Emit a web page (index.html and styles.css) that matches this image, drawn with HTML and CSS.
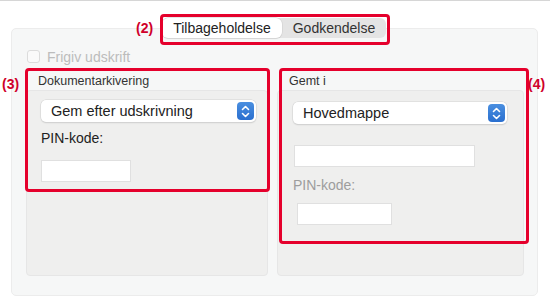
FILE: index.html
```html
<!DOCTYPE html>
<html lang="da">
<head>
<meta charset="UTF-8" />
<title>Tilbageholdelse</title>
<link rel="stylesheet" href="styles.css">
</head>
<body>

<div class="page">
  <div class="seg">
    <div class="seg-tab active">Tilbageholdelse</div>
    <div class="seg-tab">Godkendelse</div>
  </div>

  <div class="panel">
    <label class="check">
      <span class="box"></span>
      Frigiv udskrift
    </label>

    <div class="groups">
      <div class="group">
        <div class="group-title">Dokumentarkivering</div>
        <div class="group-box">
          <div class="select">
            <span>Gem efter udskrivning</span>
            <span class="stepper">
              <svg width="9" height="13" viewBox="0 0 9 13"><path d="M1.5 4.5 L4.5 1.5 L7.5 4.5 M1.5 8.5 L4.5 11.5 L7.5 8.5" fill="none" stroke="#fff" stroke-width="1.6" stroke-linecap="round" stroke-linejoin="round"/></svg>
            </span>
          </div>
          <div class="field-label">PIN-kode:</div>
          <div class="input pin"></div>
        </div>
      </div>

      <div class="group right">
        <div class="group-title">Gemt i</div>
        <div class="group-box">
          <div class="select">
            <span>Hovedmappe</span>
            <span class="stepper">
              <svg width="9" height="13" viewBox="0 0 9 13"><path d="M1.5 4.5 L4.5 1.5 L7.5 4.5 M1.5 8.5 L4.5 11.5 L7.5 8.5" fill="none" stroke="#fff" stroke-width="1.6" stroke-linecap="round" stroke-linejoin="round"/></svg>
            </span>
          </div>
          <div class="input wide"></div>
          <div class="field-label muted">PIN-kode:</div>
          <div class="input pin2"></div>
        </div>
      </div>
    </div>
  </div>

  <!-- callouts -->
  <div class="callout c2"></div>
  <div class="callout c3"></div>
  <div class="callout c4"></div>
  <div class="num n2">(2)</div>
  <div class="num n3">(3)</div>
  <div class="num n4">(4)</div>
</div>

</body>
</html>
```

FILE: styles.css
```css
body {
  margin: 0;
  background: #fff;
  font-family: "Liberation Sans", Arial, sans-serif;
  color: #222;
}

.page {
  position: relative;
  width: 550px;
  height: 305px;
  border-top: 1px solid #d6d6d6;
  box-sizing: border-box;
  padding-top: 17px;
}

.seg {
  position: relative;
  z-index: 2;
  display: flex;
  width: 224px;
  height: 20px;
  margin-left: 162px;
  background: #e4e4e4;
  border-radius: 6px;
  font-size: 14px;
}

.seg-tab {
  flex: 1;
  display: flex;
  align-items: center;
  justify-content: center;
  color: #333;
}

.seg-tab.active {
  flex: 0 0 120px;
  background: #fff;
  border-radius: 6px;
  box-shadow: 0 0 0 0.5px #d0d0d0, 0 1px 1px rgba(0,0,0,0.12);
  color: #222;
}

.panel {
  margin: -10px 0 0 11px;
  width: 527px;
  height: 268px;
  box-sizing: border-box;
  background: #f6f7f7;
  border: 1px solid #ececec;
  border-radius: 5px;
  padding: 21px 13px 0 14px;
}

.check {
  display: flex;
  align-items: center;
  gap: 7px;
  margin-left: 1px;
  height: 13px;
  font-size: 14px;
  color: #bcbcbc;
}

.check .box {
  width: 11px;
  height: 11px;
  border: 1px solid #dcdcdc;
  border-radius: 3px;
  background: #fafafa;
}

.groups {
  display: flex;
  gap: 9px;
  margin-top: 10px;
}

.group {
  width: 242px;
}

.group.right {
  width: 247px;
}

.group-title {
  font-size: 12.5px;
  color: #333;
  padding-left: 12px;
  height: 17px;
  line-height: 17px;
}

.group-box {
  height: 186px;
  box-sizing: border-box;
  background: #efefee;
  border: 1px solid #e6e6e6;
  border-radius: 4px;
  padding: 9px 11px 0 14px;
}

.select {
  display: flex;
  align-items: center;
  justify-content: space-between;
  height: 22px;
  background: #fff;
  border-radius: 5px;
  box-shadow: 0 0 0 0.5px #d3d3d3, 0 1px 1.5px rgba(0,0,0,0.15);
  padding: 0 2px 0 10px;
  font-size: 14.5px;
  color: #222;
}

.stepper {
  width: 17px;
  height: 18px;
  display: flex;
  align-items: center;
  justify-content: center;
  background: linear-gradient(#4a8fe0, #2a6fcf);
  border-radius: 4px;
}

.field-label {
  font-size: 14px;
  margin-top: 8px;
  height: 18px;
  color: #222;
}

.field-label.muted {
  color: #9d9d9d;
  margin-top: 10px;
}

.input {
  height: 22px;
  background: #fff;
  border: 1px solid #e0e0e0;
  box-sizing: border-box;
}

.input.pin {
  width: 90px;
  margin-top: 12px;
}

.right .group-box {
  padding-left: 15px;
  padding-right: 16px;
}

.right .select {
  margin-top: 2px;
}

.input.wide {
  width: 181px;
  margin-top: 21px;
  margin-left: 1px;
}

.input.pin2 {
  width: 95px;
  margin-top: 8px;
  margin-left: 4px;
}

/* red callout frames sit over the dialog */
.callout {
  position: absolute;
  border: 3px solid #e5002c;
  border-radius: 4px;
  box-sizing: border-box;
  z-index: 3;
}

.c2 { left: 160px; top: 13px; width: 230px; height: 31px; }
.c3 { left: 25px; top: 67px; width: 245px; height: 124px; }
.c4 { left: 279px; top: 67px; width: 250px; height: 176px; }

.num {
  position: absolute;
  font-size: 14px;
  font-weight: bold;
  color: #d0002a;
  z-index: 3;
}

.n2 { left: 136px; top: 19px; }
.n3 { left: 2px; top: 75px; }
.n4 { left: 528px; top: 75px; }
```
